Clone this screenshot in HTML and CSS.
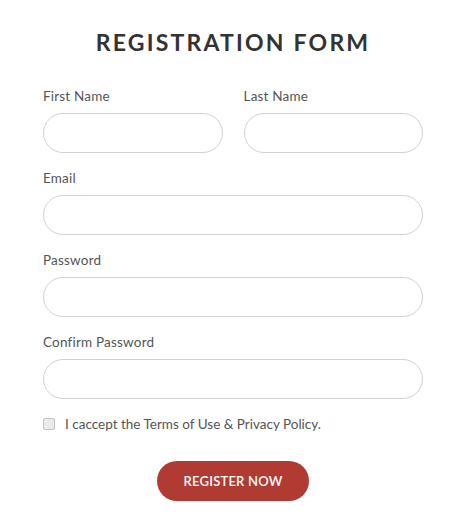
FILE: index.html
```html
<!DOCTYPE html>
<html lang="en">
<head>
<meta charset="utf-8">
<title>Registration Form</title>
<link rel="stylesheet" href="styles.css">
</head>
<body>
<div class="wrap">
  <h1 class="title">REGISTRATION FORM</h1>
  <form class="form">
    <div class="row">
      <div class="field">
        <label class="label">First Name</label>
        <input class="input" type="text">
      </div>
      <div class="field">
        <label class="label">Last Name</label>
        <input class="input" type="text">
      </div>
    </div>
    <div class="field">
      <label class="label">Email</label>
      <input class="input" type="email">
    </div>
    <div class="field">
      <label class="label">Password</label>
      <input class="input" type="password">
    </div>
    <div class="field">
      <label class="label">Confirm Password</label>
      <input class="input" type="password">
    </div>
    <label class="check">
      <span class="box"></span>
      <span class="check-text">I caccept the Terms of Use &amp; Privacy Policy.</span>
    </label>
    <div class="actions">
      <button class="btn" type="button">REGISTER NOW</button>
    </div>
  </form>
</div>
</body>
</html>
```
FILE: styles.css
```css
* { box-sizing: border-box; }
html, body { margin: 0; padding: 0; background: #fff; }
body { font-family: Lato, "Open Sans", sans-serif; color: #555; }
.wrap { width: 380px; margin-left: 43px; padding-top: 28px; }
.title {
  margin: 0;
  text-align: center;
  font-size: 23px;
  line-height: 28px;
  font-weight: 700;
  letter-spacing: 2.2px;
  color: #333;
}
.form { display: flex; flex-direction: column; gap: 17px; margin-top: 32px; }
.row { display: flex; gap: 21px; }
.row .field { flex: 1; }
.field { display: flex; flex-direction: column; gap: 9px; }
.label { font-size: 13.5px; line-height: 16px; color: #555; letter-spacing: 0.2px; }
.input {
  height: 40px;
  border: 1px solid #d2d2d2;
  border-radius: 20px;
  background: #fff;
  width: 100%;
  padding: 0 16px;
  font: inherit;
  outline: none;
}
.check { display: flex; align-items: center; gap: 10px; height: 16px; font-size: 13.5px; letter-spacing: 0; color: #555; }
.box {
  width: 12px; height: 12px;
  border: 1px solid #c4c4c4;
  border-radius: 2px;
  background: #ebebeb;
}
.actions { display: flex; justify-content: center; margin-top: 12px; }
.btn {
  width: 152px; height: 40px;
  border: none;
  border-radius: 20px;
  background: #b03b33;
  color: #fff;
  font-family: Lato, "Open Sans", sans-serif;
  font-size: 13px;
  font-weight: 600;
  letter-spacing: 0.2px;
}
```
